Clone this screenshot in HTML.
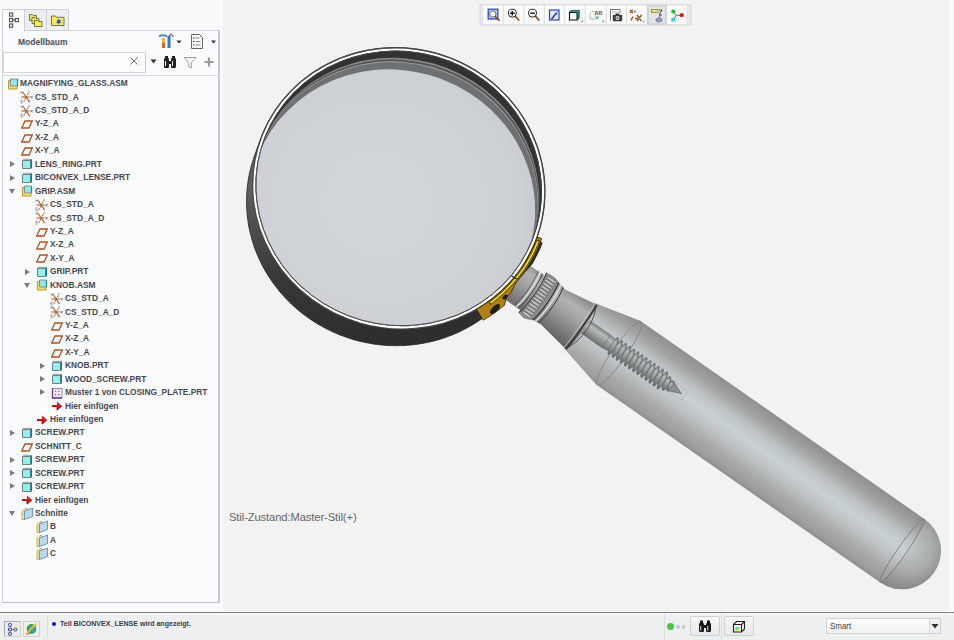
<!DOCTYPE html>
<html><head><meta charset="utf-8">
<style>
*{margin:0;padding:0;box-sizing:border-box}
html,body{width:954px;height:640px;overflow:hidden;background:#f2f2f2;font-family:"Liberation Sans",sans-serif}
.abs{position:absolute}
#left{position:absolute;left:0;top:0;width:223px;height:612px;background:#fafafc}
#panel{position:absolute;left:2px;top:30px;width:218px;height:573px;background:#fafbfd;border:1px solid #cfd2d6;border-right:2px solid #c6cacf;border-bottom:1.5px solid #c2c5c9}
.row{position:absolute;height:14px;font-size:9.5px;font-weight:bold;color:#474751;white-space:nowrap;line-height:14px;transform:scaleX(0.88);transform-origin:0 0}
#status{position:absolute;left:0;top:611.5px;width:954px;height:28.5px;background:#eeeff1;border-top:1.5px solid #7e7e7e;box-shadow:0 -1px 0 #fafafa}
#view{position:absolute;left:0;top:0}

</style></head><body>
<div id="left"></div>
<div id="panel"></div>
<!-- tabs -->
<div class="abs" style="left:2px;top:9px;width:23px;height:23px;background:#fafbfd;border:1px solid #cdd0d4;border-bottom:none"></div>
<div class="abs" style="left:24px;top:9px;width:23px;height:22px;background:#ecedf0;border:1px solid #cdd0d4"></div>
<div class="abs" style="left:46px;top:9px;width:23px;height:22px;background:#ecedf0;border:1px solid #cdd0d4"></div>
<svg class="abs" style="left:8px;top:12px" width="12" height="16" viewBox="0 0 12 16"><g fill="none" stroke="#505050" stroke-width="1.1"><rect x="1.5" y="1" width="3.2" height="3.2"/><rect x="1.5" y="6.5" width="3.2" height="3.2"/><rect x="7.3" y="6.5" width="3.2" height="3.2"/><rect x="1.5" y="12" width="3.2" height="3.2"/><path d="M4.7 8.1h2.6"/></g></svg>
<svg class="abs" style="left:28px;top:12px" width="16" height="16" viewBox="0 0 16 16"><g stroke="#5a5a40" stroke-width="0.8"><path d="M1.5 2.5h3l1 1h3v5h-7z" fill="#e8e060"/><path d="M4 5.5h3l1 1h3v5h-7z" fill="#eee45a"/><path d="M6.5 8.5h3l1 1h3.5v5h-7.5z" fill="#f8f04a"/></g></svg>
<svg class="abs" style="left:50px;top:14px" width="16" height="13" viewBox="0 0 16 13"><path d="M1.5 2h4l1 1.3h7.5v8.2h-12.5z" fill="#f5ee50" stroke="#6a6640" stroke-width="0.9"/><path d="M7.8 4.5l1.3 1.5 1.8-.3-.6 1.8 1 1.5-1.9.1-1 1.6-.7-1.7-1.8-.4 1.3-1.2z" fill="#3848e0"/></svg>
<!-- header -->
<div class="abs" style="left:18px;top:37px;font-size:8.5px;font-weight:bold;color:#4c4c5a;line-height:10px">Modellbaum</div>
<svg class="abs" style="left:157px;top:33px" width="26" height="17" viewBox="0 0 26 17"><path d="M2 3.5c2-1.5 5-1.5 8 0" stroke="#4a8ab8" stroke-width="2" fill="none"/><rect x="5" y="5" width="3" height="10" fill="#e06020"/><rect x="5" y="5" width="3" height="5" fill="#f0b040"/><rect x="10.5" y="3" width="3" height="12" fill="#2a7ad0"/><path d="M12 3l2-2 2 2-1 1" stroke="#707070" stroke-width="1.2" fill="none"/><path d="M19.5 7.5h5l-2.5 3z" fill="#333"/></svg>
<svg class="abs" style="left:190px;top:33px" width="28" height="17" viewBox="0 0 28 17"><path d="M1.5 1.5h8l3 3v11h-11z" fill="#fbfbfb" stroke="#555" stroke-width="0.9"/><path d="M3 5h1.5M3 8.5h1.5M3 12h1.5" stroke="#333" stroke-width="1.2"/><path d="M5.5 5h4M5.5 8.5h5M5.5 12h5" stroke="#777" stroke-width="0.9"/><path d="M21 7.5h5l-2.5 3z" fill="#333"/></svg>
<!-- search -->
<div class="abs" style="left:3px;top:52px;width:143px;height:21px;background:#fdfdfe;border:1px solid #d4d6da;border-right-color:#c8cacd"></div>
<svg class="abs" style="left:129px;top:56px" width="10" height="10" viewBox="0 0 10 10"><path d="M1.5 1.5l7 7M8.5 1.5l-7 7" stroke="#707070" stroke-width="1"/></svg>
<svg class="abs" style="left:150px;top:59px" width="7" height="5" viewBox="0 0 7 5"><path d="M0.5 0.5h6l-3 4z" fill="#333"/></svg>
<svg class="abs" style="left:163px;top:55px" width="14" height="14" viewBox="0 0 14 14"><g fill="#222"><rect x="1" y="3" width="5" height="10" rx="1.2"/><rect x="8" y="3" width="5" height="10" rx="1.2"/><rect x="2" y="1" width="3" height="3"/><rect x="9" y="1" width="3" height="3"/><rect x="5" y="6" width="4" height="3"/></g><path d="M2.5 6v5M9.5 6v5" stroke="#eee" stroke-width="1"/></svg>
<svg class="abs" style="left:183px;top:56px" width="14" height="13" viewBox="0 0 14 13"><path d="M1 1.5h12l-4.7 5v5.5l-2.6-1.5v-4z" fill="none" stroke="#a0a0a0" stroke-width="1"/></svg>
<svg class="abs" style="left:203px;top:56px" width="12" height="12" viewBox="0 0 12 12"><path d="M6 1.5v9M1.5 6h9" stroke="#9a9a9a" stroke-width="2.2"/></svg>
<div class="abs" style="left:3px;top:75px;width:216px;height:1px;background:#d8dadd"></div>
<!-- status bar -->
<div id="status"></div>
<div class="abs" style="left:0;top:613px;width:954px;height:1.5px;background:#f5f5f7"></div>
<div class="abs" style="left:140px;top:639px;width:814px;height:1px;background:#e4f4e4"></div>
<div class="abs" style="left:4px;top:621px;width:17px;height:16px;background:#e9eaec;border:1px solid #a9abae;border-right-color:#d0d2d4;border-bottom-color:#d0d2d4"></div>
<svg class="abs" style="left:6px;top:622px" width="14" height="14" viewBox="0 0 14 14"><g fill="#cfd6f0" stroke="#2a3a90" stroke-width="1"><rect x="2.5" y="1.5" width="3" height="3" rx="1"/><rect x="2.5" y="6" width="3" height="3" rx="1"/><rect x="2.5" y="10.5" width="3" height="2.8" rx="1"/><rect x="8" y="6" width="3" height="3" rx="1.3" stroke="#555"/></g><path d="M5.5 7.5h2.5" stroke="#555" stroke-width="0.8"/></svg>
<div class="abs" style="left:23px;top:621px;width:17px;height:16px;background:#eeeff0;border:1px solid #d0d2d4"></div>
<svg class="abs" style="left:24px;top:622px" width="15" height="14" viewBox="0 0 15 14"><ellipse cx="7.5" cy="7" rx="4.8" ry="5" fill="#2aa84a"/><ellipse cx="7.8" cy="7" rx="2.8" ry="3.6" fill="#3a9ae8"/><path d="M2.5 12c2-3 6-7 10-10" stroke="#f0c020" stroke-width="1.8" fill="none"/><path d="M2.5 12.2c1 .3 2 0 3-1" stroke="#d04020" stroke-width="1" fill="none"/></svg>
<div class="abs" style="left:47px;top:617px;width:1px;height:21px;background:#dcdde0"></div>
<div class="abs" style="left:51.8px;top:621.7px;width:4.4px;height:4.4px;border-radius:50%;background:#1010e8"></div>
<div class="abs" style="left:60px;top:619px;font-size:7.6px;font-weight:bold;color:#3a3a44;line-height:10px;white-space:nowrap;transform:scaleX(0.93);transform-origin:0 0">Teil BICONVEX_LENSE wird angezeigt.</div>
<div class="abs" style="left:664px;top:614px;width:1px;height:25px;background:#dcdde0"></div>
<div class="abs" style="left:721px;top:614px;width:1px;height:25px;background:#dcdde0"></div>
<div class="abs" style="left:666.8px;top:623px;width:7.4px;height:7.4px;border-radius:50%;background:#3ccc3c"></div>
<div class="abs" style="left:676px;top:625px;width:3.8px;height:3.8px;border-radius:50%;background:#c8c8c8"></div>
<div class="abs" style="left:681.7px;top:625px;width:3.8px;height:3.8px;border-radius:50%;background:#c8c8c8"></div>
<div class="abs" style="left:690px;top:616px;width:30px;height:20px;background:linear-gradient(#f7f7f8,#e9e9eb);border:1px solid #cdcfd2;border-radius:2px"></div>
<svg class="abs" style="left:698px;top:620px" width="14" height="13" viewBox="0 0 14 13"><g fill="#1a1a1a"><rect x="1" y="3" width="5" height="9" rx="1.3"/><rect x="8" y="3" width="5" height="9" rx="1.3"/><rect x="2" y="0.5" width="3" height="3"/><rect x="9" y="0.5" width="3" height="3"/><rect x="5" y="5" width="4" height="3"/></g><path d="M2.7 6v4.5M9.7 6v4.5" stroke="#ddd" stroke-width="1"/></svg>
<div class="abs" style="left:724px;top:616px;width:30px;height:20px;background:linear-gradient(#f7f7f8,#e9e9eb);border:1px solid #cdcfd2;border-radius:2px"></div>
<svg class="abs" style="left:732px;top:620px" width="14" height="13" viewBox="0 0 14 13"><path d="M1.5 4.5l3-3h8v7.5l-3 3h-8z" fill="#f4f4f4" stroke="#222" stroke-width="1.1"/><path d="M1.5 4.5h8v7.5M9.5 4.5l3-3" fill="none" stroke="#222" stroke-width="1.1"/><rect x="3" y="7" width="4" height="4" fill="#f0f020"/><rect x="3.5" y="7" width="3" height="2.3" fill="#20d8f0"/></svg>
<div class="abs" style="left:826px;top:618px;width:115px;height:16px;background:linear-gradient(#fdfdfd,#f1f1f2);border:1px solid #cfd1d4"></div>
<div class="abs" style="left:929px;top:619px;width:11px;height:14px;background:#eeeff0;border-left:1px solid #d6d8da"></div>
<svg class="abs" style="left:931px;top:623px" width="8" height="6" viewBox="0 0 8 6"><path d="M0.5 1h7l-3.5 4.5z" fill="#333"/></svg>
<div class="abs" style="left:830px;top:621px;font-size:9px;color:#404040;line-height:10px;transform:scaleX(0.88);transform-origin:0 0">Smart</div>

<div id="tree">
<div class="abs" style="left:7px;top:77.90px;line-height:0"><svg width="12" height="12" viewBox="0 0 12 12"><path d="M1.5 2.5h8.5v8.5h-8.5z" fill="#f4e25a" stroke="#b89a2a" stroke-width="1"/><path d="M3.5 1h7v7h-7z" fill="#8fe8ec" stroke="#7a8a8c" stroke-width="0.9"/><path d="M10.5 1v7" stroke="#1f8f8a" stroke-width="1.2"/></svg></div>
<div class="row" style="left:20px;top:76.20px">MAGNIFYING_GLASS.ASM</div>
<div class="abs" style="left:19.7px;top:91.33px;line-height:0"><svg width="14" height="14" viewBox="0 0 14 14"><g stroke="#b05a22" stroke-width="1.1" fill="none"><path d="M1.5 6h7.8"/><path d="M2.6 0.8l7 10.3"/><path d="M9.4 0.4l-6.2 11.2" stroke-dasharray="1.6 0.9"/></g><path d="M10.3 5l2.4 2.4M12.7 5l-2.4 2.4" stroke="#5a6a80" stroke-width="0.9"/><path d="M0.6 1l1.8 1.2M2.4 1l-1.8 1.2M0.6 9h1.8M0.6 10.5h1.8M0.6 12h1.8" stroke="#6a7080" stroke-width="0.8"/></svg></div>
<div class="row" style="left:35px;top:89.63px">CS_STD_A</div>
<div class="abs" style="left:19.7px;top:104.76px;line-height:0"><svg width="14" height="14" viewBox="0 0 14 14"><g stroke="#b05a22" stroke-width="1.1" fill="none"><path d="M1.5 6h7.8"/><path d="M2.6 0.8l7 10.3"/><path d="M9.4 0.4l-6.2 11.2" stroke-dasharray="1.6 0.9"/></g><path d="M10.3 5l2.4 2.4M12.7 5l-2.4 2.4" stroke="#5a6a80" stroke-width="0.9"/><path d="M0.6 1l1.8 1.2M2.4 1l-1.8 1.2M0.6 9h1.8M0.6 10.5h1.8M0.6 12h1.8" stroke="#6a7080" stroke-width="0.8"/></svg></div>
<div class="row" style="left:35px;top:103.06px">CS_STD_A_D</div>
<div class="abs" style="left:21px;top:118.19px;line-height:0"><svg width="12" height="12" viewBox="0 0 12 12"><path d="M4 3h7.3l-3.3 7h-7.3z" fill="none" stroke="#b0521c" stroke-width="1.3"/></svg></div>
<div class="row" style="left:35px;top:116.49px">Y-Z_A</div>
<div class="abs" style="left:21px;top:131.62px;line-height:0"><svg width="12" height="12" viewBox="0 0 12 12"><path d="M4 3h7.3l-3.3 7h-7.3z" fill="none" stroke="#b0521c" stroke-width="1.3"/></svg></div>
<div class="row" style="left:35px;top:129.92px">X-Z_A</div>
<div class="abs" style="left:21px;top:145.05px;line-height:0"><svg width="12" height="12" viewBox="0 0 12 12"><path d="M4 3h7.3l-3.3 7h-7.3z" fill="none" stroke="#b0521c" stroke-width="1.3"/></svg></div>
<div class="row" style="left:35px;top:143.35px">X-Y_A</div>
<div class="abs" style="left:10.2px;top:161.08px;width:0;height:0;border-top:3.4px solid transparent;border-bottom:3.4px solid transparent;border-left:5.6px solid #7c7c7c"></div>
<div class="abs" style="left:21px;top:158.48px;line-height:0"><svg width="12" height="12" viewBox="0 0 12 12"><path d="M1.5 2.5h8v8h-8z" fill="#8ff0f2" stroke="#6f7f80" stroke-width="1"/><path d="M2 1.3h8.3v8.2" fill="none" stroke="#8a9090" stroke-width="0.9"/><path d="M10.3 1.5v9" stroke="#137f78" stroke-width="1.5"/></svg></div>
<div class="row" style="left:35px;top:156.78px">LENS_RING.PRT</div>
<div class="abs" style="left:10.2px;top:174.51px;width:0;height:0;border-top:3.4px solid transparent;border-bottom:3.4px solid transparent;border-left:5.6px solid #7c7c7c"></div>
<div class="abs" style="left:21px;top:171.91px;line-height:0"><svg width="12" height="12" viewBox="0 0 12 12"><path d="M1.5 2.5h8v8h-8z" fill="#8ff0f2" stroke="#6f7f80" stroke-width="1"/><path d="M2 1.3h8.3v8.2" fill="none" stroke="#8a9090" stroke-width="0.9"/><path d="M10.3 1.5v9" stroke="#137f78" stroke-width="1.5"/></svg></div>
<div class="row" style="left:35px;top:170.21px">BICONVEX_LENSE.PRT</div>
<div class="abs" style="left:9.299999999999999px;top:188.74px;width:0;height:0;border-left:3.3px solid transparent;border-right:3.3px solid transparent;border-top:5.5px solid #7c7c7c"></div>
<div class="abs" style="left:21px;top:185.34px;line-height:0"><svg width="12" height="12" viewBox="0 0 12 12"><path d="M1.5 2.5h8.5v8.5h-8.5z" fill="#f4e25a" stroke="#b89a2a" stroke-width="1"/><path d="M3.5 1h7v7h-7z" fill="#8fe8ec" stroke="#7a8a8c" stroke-width="0.9"/><path d="M10.5 1v7" stroke="#1f8f8a" stroke-width="1.2"/></svg></div>
<div class="row" style="left:35px;top:183.64px">GRIP.ASM</div>
<div class="abs" style="left:34.7px;top:198.77px;line-height:0"><svg width="14" height="14" viewBox="0 0 14 14"><g stroke="#b05a22" stroke-width="1.1" fill="none"><path d="M1.5 6h7.8"/><path d="M2.6 0.8l7 10.3"/><path d="M9.4 0.4l-6.2 11.2" stroke-dasharray="1.6 0.9"/></g><path d="M10.3 5l2.4 2.4M12.7 5l-2.4 2.4" stroke="#5a6a80" stroke-width="0.9"/><path d="M0.6 1l1.8 1.2M2.4 1l-1.8 1.2M0.6 9h1.8M0.6 10.5h1.8M0.6 12h1.8" stroke="#6a7080" stroke-width="0.8"/></svg></div>
<div class="row" style="left:50px;top:197.07px">CS_STD_A</div>
<div class="abs" style="left:34.7px;top:212.20px;line-height:0"><svg width="14" height="14" viewBox="0 0 14 14"><g stroke="#b05a22" stroke-width="1.1" fill="none"><path d="M1.5 6h7.8"/><path d="M2.6 0.8l7 10.3"/><path d="M9.4 0.4l-6.2 11.2" stroke-dasharray="1.6 0.9"/></g><path d="M10.3 5l2.4 2.4M12.7 5l-2.4 2.4" stroke="#5a6a80" stroke-width="0.9"/><path d="M0.6 1l1.8 1.2M2.4 1l-1.8 1.2M0.6 9h1.8M0.6 10.5h1.8M0.6 12h1.8" stroke="#6a7080" stroke-width="0.8"/></svg></div>
<div class="row" style="left:50px;top:210.50px">CS_STD_A_D</div>
<div class="abs" style="left:36px;top:225.63px;line-height:0"><svg width="12" height="12" viewBox="0 0 12 12"><path d="M4 3h7.3l-3.3 7h-7.3z" fill="none" stroke="#b0521c" stroke-width="1.3"/></svg></div>
<div class="row" style="left:50px;top:223.93px">Y-Z_A</div>
<div class="abs" style="left:36px;top:239.06px;line-height:0"><svg width="12" height="12" viewBox="0 0 12 12"><path d="M4 3h7.3l-3.3 7h-7.3z" fill="none" stroke="#b0521c" stroke-width="1.3"/></svg></div>
<div class="row" style="left:50px;top:237.36px">X-Z_A</div>
<div class="abs" style="left:36px;top:252.49px;line-height:0"><svg width="12" height="12" viewBox="0 0 12 12"><path d="M4 3h7.3l-3.3 7h-7.3z" fill="none" stroke="#b0521c" stroke-width="1.3"/></svg></div>
<div class="row" style="left:50px;top:250.79px">X-Y_A</div>
<div class="abs" style="left:25.2px;top:268.52px;width:0;height:0;border-top:3.4px solid transparent;border-bottom:3.4px solid transparent;border-left:5.6px solid #7c7c7c"></div>
<div class="abs" style="left:36px;top:265.92px;line-height:0"><svg width="12" height="12" viewBox="0 0 12 12"><path d="M1.5 2.5h8v8h-8z" fill="#8ff0f2" stroke="#6f7f80" stroke-width="1"/><path d="M2 1.3h8.3v8.2" fill="none" stroke="#8a9090" stroke-width="0.9"/><path d="M10.3 1.5v9" stroke="#137f78" stroke-width="1.5"/></svg></div>
<div class="row" style="left:50px;top:264.22px">GRIP.PRT</div>
<div class="abs" style="left:24.3px;top:282.75px;width:0;height:0;border-left:3.3px solid transparent;border-right:3.3px solid transparent;border-top:5.5px solid #7c7c7c"></div>
<div class="abs" style="left:36px;top:279.35px;line-height:0"><svg width="12" height="12" viewBox="0 0 12 12"><path d="M1.5 2.5h8.5v8.5h-8.5z" fill="#f4e25a" stroke="#b89a2a" stroke-width="1"/><path d="M3.5 1h7v7h-7z" fill="#8fe8ec" stroke="#7a8a8c" stroke-width="0.9"/><path d="M10.5 1v7" stroke="#1f8f8a" stroke-width="1.2"/></svg></div>
<div class="row" style="left:50px;top:277.65px">KNOB.ASM</div>
<div class="abs" style="left:49.7px;top:292.78px;line-height:0"><svg width="14" height="14" viewBox="0 0 14 14"><g stroke="#b05a22" stroke-width="1.1" fill="none"><path d="M1.5 6h7.8"/><path d="M2.6 0.8l7 10.3"/><path d="M9.4 0.4l-6.2 11.2" stroke-dasharray="1.6 0.9"/></g><path d="M10.3 5l2.4 2.4M12.7 5l-2.4 2.4" stroke="#5a6a80" stroke-width="0.9"/><path d="M0.6 1l1.8 1.2M2.4 1l-1.8 1.2M0.6 9h1.8M0.6 10.5h1.8M0.6 12h1.8" stroke="#6a7080" stroke-width="0.8"/></svg></div>
<div class="row" style="left:65px;top:291.08px">CS_STD_A</div>
<div class="abs" style="left:49.7px;top:306.21px;line-height:0"><svg width="14" height="14" viewBox="0 0 14 14"><g stroke="#b05a22" stroke-width="1.1" fill="none"><path d="M1.5 6h7.8"/><path d="M2.6 0.8l7 10.3"/><path d="M9.4 0.4l-6.2 11.2" stroke-dasharray="1.6 0.9"/></g><path d="M10.3 5l2.4 2.4M12.7 5l-2.4 2.4" stroke="#5a6a80" stroke-width="0.9"/><path d="M0.6 1l1.8 1.2M2.4 1l-1.8 1.2M0.6 9h1.8M0.6 10.5h1.8M0.6 12h1.8" stroke="#6a7080" stroke-width="0.8"/></svg></div>
<div class="row" style="left:65px;top:304.51px">CS_STD_A_D</div>
<div class="abs" style="left:51px;top:319.64px;line-height:0"><svg width="12" height="12" viewBox="0 0 12 12"><path d="M4 3h7.3l-3.3 7h-7.3z" fill="none" stroke="#b0521c" stroke-width="1.3"/></svg></div>
<div class="row" style="left:65px;top:317.94px">Y-Z_A</div>
<div class="abs" style="left:51px;top:333.07px;line-height:0"><svg width="12" height="12" viewBox="0 0 12 12"><path d="M4 3h7.3l-3.3 7h-7.3z" fill="none" stroke="#b0521c" stroke-width="1.3"/></svg></div>
<div class="row" style="left:65px;top:331.37px">X-Z_A</div>
<div class="abs" style="left:51px;top:346.50px;line-height:0"><svg width="12" height="12" viewBox="0 0 12 12"><path d="M4 3h7.3l-3.3 7h-7.3z" fill="none" stroke="#b0521c" stroke-width="1.3"/></svg></div>
<div class="row" style="left:65px;top:344.80px">X-Y_A</div>
<div class="abs" style="left:40.2px;top:362.53px;width:0;height:0;border-top:3.4px solid transparent;border-bottom:3.4px solid transparent;border-left:5.6px solid #7c7c7c"></div>
<div class="abs" style="left:51px;top:359.93px;line-height:0"><svg width="12" height="12" viewBox="0 0 12 12"><path d="M1.5 2.5h8v8h-8z" fill="#8ff0f2" stroke="#6f7f80" stroke-width="1"/><path d="M2 1.3h8.3v8.2" fill="none" stroke="#8a9090" stroke-width="0.9"/><path d="M10.3 1.5v9" stroke="#137f78" stroke-width="1.5"/></svg></div>
<div class="row" style="left:65px;top:358.23px">KNOB.PRT</div>
<div class="abs" style="left:40.2px;top:375.96px;width:0;height:0;border-top:3.4px solid transparent;border-bottom:3.4px solid transparent;border-left:5.6px solid #7c7c7c"></div>
<div class="abs" style="left:51px;top:373.36px;line-height:0"><svg width="12" height="12" viewBox="0 0 12 12"><path d="M1.5 2.5h8v8h-8z" fill="#8ff0f2" stroke="#6f7f80" stroke-width="1"/><path d="M2 1.3h8.3v8.2" fill="none" stroke="#8a9090" stroke-width="0.9"/><path d="M10.3 1.5v9" stroke="#137f78" stroke-width="1.5"/></svg></div>
<div class="row" style="left:65px;top:371.66px">WOOD_SCREW.PRT</div>
<div class="abs" style="left:40.2px;top:389.39px;width:0;height:0;border-top:3.4px solid transparent;border-bottom:3.4px solid transparent;border-left:5.6px solid #7c7c7c"></div>
<div class="abs" style="left:51px;top:386.79px;line-height:0"><svg width="12" height="12" viewBox="0 0 12 12"><rect x="1.5" y="1.5" width="9.5" height="9.5" fill="#f3eefc" stroke="#9a7ac8" stroke-width="1"/><path d="M1.5 1.5v9.5h9.5" fill="none" stroke="#6a3aa8" stroke-width="1.3"/><g fill="#7a4ac0"><rect x="4" y="3.5" width="1.3" height="1.3"/><rect x="7.2" y="3.5" width="1.3" height="1.3"/><rect x="4" y="7" width="1.3" height="1.3"/><rect x="7.2" y="7" width="1.3" height="1.3"/></g></svg></div>
<div class="row" style="left:65px;top:385.09px">Muster 1 von CLOSING_PLATE.PRT</div>
<div class="abs" style="left:51px;top:400.22px;line-height:0"><svg width="12" height="12" viewBox="0 0 12 12"><path d="M1 5h5v-3.5l5 4.5-5 4.5v-3.5h-5z" fill="#e01818"/><path d="M1 6.5h5v3.5l5-4" fill="none" stroke="#8a0a0a" stroke-width="0.8"/></svg></div>
<div class="row" style="left:65px;top:398.52px">Hier einfügen</div>
<div class="abs" style="left:36px;top:413.65px;line-height:0"><svg width="12" height="12" viewBox="0 0 12 12"><path d="M1 5h5v-3.5l5 4.5-5 4.5v-3.5h-5z" fill="#e01818"/><path d="M1 6.5h5v3.5l5-4" fill="none" stroke="#8a0a0a" stroke-width="0.8"/></svg></div>
<div class="row" style="left:50px;top:411.95px">Hier einfügen</div>
<div class="abs" style="left:10.2px;top:429.68px;width:0;height:0;border-top:3.4px solid transparent;border-bottom:3.4px solid transparent;border-left:5.6px solid #7c7c7c"></div>
<div class="abs" style="left:21px;top:427.08px;line-height:0"><svg width="12" height="12" viewBox="0 0 12 12"><path d="M1.5 2.5h8v8h-8z" fill="#8ff0f2" stroke="#6f7f80" stroke-width="1"/><path d="M2 1.3h8.3v8.2" fill="none" stroke="#8a9090" stroke-width="0.9"/><path d="M10.3 1.5v9" stroke="#137f78" stroke-width="1.5"/></svg></div>
<div class="row" style="left:35px;top:425.38px">SCREW.PRT</div>
<div class="abs" style="left:21px;top:440.51px;line-height:0"><svg width="12" height="12" viewBox="0 0 12 12"><path d="M4 3h7.3l-3.3 7h-7.3z" fill="none" stroke="#b0521c" stroke-width="1.3"/></svg></div>
<div class="row" style="left:35px;top:438.81px">SCHNITT_C</div>
<div class="abs" style="left:10.2px;top:456.54px;width:0;height:0;border-top:3.4px solid transparent;border-bottom:3.4px solid transparent;border-left:5.6px solid #7c7c7c"></div>
<div class="abs" style="left:21px;top:453.94px;line-height:0"><svg width="12" height="12" viewBox="0 0 12 12"><path d="M1.5 2.5h8v8h-8z" fill="#8ff0f2" stroke="#6f7f80" stroke-width="1"/><path d="M2 1.3h8.3v8.2" fill="none" stroke="#8a9090" stroke-width="0.9"/><path d="M10.3 1.5v9" stroke="#137f78" stroke-width="1.5"/></svg></div>
<div class="row" style="left:35px;top:452.24px">SCREW.PRT</div>
<div class="abs" style="left:10.2px;top:469.97px;width:0;height:0;border-top:3.4px solid transparent;border-bottom:3.4px solid transparent;border-left:5.6px solid #7c7c7c"></div>
<div class="abs" style="left:21px;top:467.37px;line-height:0"><svg width="12" height="12" viewBox="0 0 12 12"><path d="M1.5 2.5h8v8h-8z" fill="#8ff0f2" stroke="#6f7f80" stroke-width="1"/><path d="M2 1.3h8.3v8.2" fill="none" stroke="#8a9090" stroke-width="0.9"/><path d="M10.3 1.5v9" stroke="#137f78" stroke-width="1.5"/></svg></div>
<div class="row" style="left:35px;top:465.67px">SCREW.PRT</div>
<div class="abs" style="left:10.2px;top:483.40px;width:0;height:0;border-top:3.4px solid transparent;border-bottom:3.4px solid transparent;border-left:5.6px solid #7c7c7c"></div>
<div class="abs" style="left:21px;top:480.80px;line-height:0"><svg width="12" height="12" viewBox="0 0 12 12"><path d="M1.5 2.5h8v8h-8z" fill="#8ff0f2" stroke="#6f7f80" stroke-width="1"/><path d="M2 1.3h8.3v8.2" fill="none" stroke="#8a9090" stroke-width="0.9"/><path d="M10.3 1.5v9" stroke="#137f78" stroke-width="1.5"/></svg></div>
<div class="row" style="left:35px;top:479.10px">SCREW.PRT</div>
<div class="abs" style="left:21px;top:494.23px;line-height:0"><svg width="12" height="12" viewBox="0 0 12 12"><path d="M1 5h5v-3.5l5 4.5-5 4.5v-3.5h-5z" fill="#e01818"/><path d="M1 6.5h5v3.5l5-4" fill="none" stroke="#8a0a0a" stroke-width="0.8"/></svg></div>
<div class="row" style="left:35px;top:492.53px">Hier einfügen</div>
<div class="abs" style="left:9.299999999999999px;top:511.06px;width:0;height:0;border-left:3.3px solid transparent;border-right:3.3px solid transparent;border-top:5.5px solid #7c7c7c"></div>
<div class="abs" style="left:21px;top:506.66px;line-height:0"><svg width="13" height="13" viewBox="0 0 13 13"><path d="M1 4.5l3-3h2v9l-3 2h-2z" fill="#f1e28a" stroke="#b6a060" stroke-width="0.8"/><path d="M3.5 4l8-3v8.5l-8 3z" fill="#b9d9f2" stroke="#5f8fb5" stroke-width="0.9"/></svg></div>
<div class="row" style="left:35px;top:505.96px">Schnitte</div>
<div class="abs" style="left:36px;top:520.09px;line-height:0"><svg width="13" height="13" viewBox="0 0 13 13"><path d="M1 4.5l3-3h2v9l-3 2h-2z" fill="#f1e28a" stroke="#b6a060" stroke-width="0.8"/><path d="M3.5 4l8-3v8.5l-8 3z" fill="#b9d9f2" stroke="#5f8fb5" stroke-width="0.9"/></svg></div>
<div class="row" style="left:50px;top:519.39px">B</div>
<div class="abs" style="left:36px;top:533.52px;line-height:0"><svg width="13" height="13" viewBox="0 0 13 13"><path d="M1 4.5l3-3h2v9l-3 2h-2z" fill="#f1e28a" stroke="#b6a060" stroke-width="0.8"/><path d="M3.5 4l8-3v8.5l-8 3z" fill="#b9d9f2" stroke="#5f8fb5" stroke-width="0.9"/></svg></div>
<div class="row" style="left:50px;top:532.82px">A</div>
<div class="abs" style="left:36px;top:546.95px;line-height:0"><svg width="13" height="13" viewBox="0 0 13 13"><path d="M1 4.5l3-3h2v9l-3 2h-2z" fill="#f1e28a" stroke="#b6a060" stroke-width="0.8"/><path d="M3.5 4l8-3v8.5l-8 3z" fill="#b9d9f2" stroke="#5f8fb5" stroke-width="0.9"/></svg></div>
<div class="row" style="left:50px;top:546.25px">C</div>
</div>
<svg id="view" width="954" height="640" viewBox="0 0 954 640" style="position:absolute;left:0;top:0">
<defs><linearGradient id="band" x1="0" y1="0" x2="0.25" y2="1"><stop offset="0" stop-color="#7a7a7a"/><stop offset="0.45" stop-color="#5e5e5e"/><stop offset="0.75" stop-color="#383838"/><stop offset="1" stop-color="#2e2e2e"/></linearGradient><radialGradient id="lens" cx="0.45" cy="0.5" r="0.6"><stop offset="0" stop-color="#d3d6da"/><stop offset="0.8" stop-color="#cdd1d5"/><stop offset="1" stop-color="#c6cacf"/></radialGradient><clipPath id="inner"><ellipse cx="398.70" cy="188.40" rx="143.50" ry="137.10" transform="rotate(15.8 398.70 188.40)" /></clipPath></defs>
<rect x="948.5" y="0" width="1.5" height="611" fill="#f5f5f5"/><rect x="950" y="0" width="4" height="611" fill="#fafafa"/>
<path d="M246.6 201.2 L246.6 197.5 L246.8 193.8 L247.0 190.1 L247.4 186.5 L247.9 182.8 L248.4 179.2 L249.1 175.6 L249.8 172.0 L250.7 168.4 L251.6 164.8 L252.7 161.3 L253.8 157.8 L259.6 141.4 L260.9 138.0 L262.2 134.5 L263.6 131.1 L265.2 127.8 L266.8 124.5 L268.5 121.2 L270.3 118.0 L272.2 114.8 L274.1 111.7 L276.2 108.6 L278.3 105.6 L280.5 102.7 L282.8 99.8 L285.2 96.9 L287.7 94.2 L290.2 91.5 L292.8 88.8 L295.5 86.2 L298.2 83.7 L301.1 81.3 L303.9 78.9 L306.9 76.7 L309.9 74.4 L313.0 72.3 L316.1 70.3 L319.3 68.3 L322.6 66.4 L325.9 64.6 L329.2 62.9 L332.6 61.3 L336.0 59.7 L339.5 58.3 L343.0 56.9 L346.6 55.6 L350.2 54.4 L353.8 53.3 L357.5 52.3 L361.2 51.4 L364.9 50.6 L368.6 49.9 L372.4 49.3 L376.2 48.7 L380.0 48.3 L383.8 48.0 L387.6 47.7 L391.4 47.6 L395.2 47.5 L399.1 47.6 L402.9 47.7 L406.7 47.9 L410.5 48.3 L414.4 48.7 L418.2 49.2 L422.0 49.9 L425.7 50.6 L429.5 51.4 L433.2 52.3 L436.9 53.3 L440.6 54.4 L444.3 55.6 L447.9 56.9 L451.5 58.2 L455.0 59.7 L458.6 61.2 L462.0 62.9 L465.5 64.6 L468.8 66.4 L472.2 68.3 L475.5 70.2 L478.7 72.3 L481.9 74.4 L485.0 76.6 L488.1 78.9 L491.1 81.2 L494.0 83.7 L496.9 86.2 L499.7 88.7 L502.4 91.4 L505.1 94.1 L507.7 96.9 L510.2 99.7 L512.7 102.6 L515.0 105.6 L517.3 108.6 L519.5 111.6 L521.6 114.8 L523.7 117.9 L525.6 121.1 L527.5 124.4 L529.3 127.7 L530.9 131.1 L532.5 134.4 L534.0 137.9 L535.4 141.3 L536.8 144.8 L538.0 148.3 L539.1 151.9 L540.1 155.5 L541.1 159.1 L541.9 162.7 L542.7 166.3 L543.3 170.0 L543.8 173.6 L544.3 177.3 L544.6 181.0 L544.9 184.7 L545.0 188.4 L545.0 192.0 L545.0 195.7 L544.8 199.4 L544.6 203.1 L544.2 206.7 L543.7 210.4 L543.2 214.0 L542.5 217.6 L541.8 221.2 L540.9 224.8 L540.0 228.4 L538.9 231.9 L537.8 235.4 L532.0 251.8 L530.7 255.2 L529.4 258.7 L528.0 262.1 L526.4 265.4 L524.8 268.7 L523.1 272.0 L521.3 275.2 L519.4 278.4 L517.5 281.5 L515.4 284.6 L513.3 287.6 L511.1 290.5 L508.8 293.4 L506.4 296.3 L503.9 299.0 L501.4 301.7 L498.8 304.4 L496.1 307.0 L493.4 309.5 L490.5 311.9 L487.7 314.3 L484.7 316.5 L481.7 318.8 L478.6 320.9 L475.5 322.9 L472.3 324.9 L469.0 326.8 L465.7 328.6 L462.4 330.3 L459.0 331.9 L455.6 333.5 L452.1 334.9 L448.6 336.3 L445.0 337.6 L441.4 338.8 L437.8 339.9 L434.1 340.9 L430.4 341.8 L426.7 342.6 L423.0 343.3 L419.2 343.9 L415.4 344.5 L411.6 344.9 L407.8 345.2 L404.0 345.5 L400.2 345.6 L396.4 345.7 L392.5 345.6 L388.7 345.5 L384.9 345.3 L381.1 344.9 L377.2 344.5 L373.4 344.0 L369.6 343.3 L365.9 342.6 L362.1 341.8 L358.4 340.9 L354.7 339.9 L351.0 338.8 L347.3 337.6 L343.7 336.3 L340.1 335.0 L336.6 333.5 L333.0 332.0 L329.6 330.3 L326.1 328.6 L322.8 326.8 L319.4 324.9 L316.1 323.0 L312.9 320.9 L309.7 318.8 L306.6 316.6 L303.5 314.3 L300.5 312.0 L297.6 309.5 L294.7 307.0 L291.9 304.5 L289.2 301.8 L286.5 299.1 L283.9 296.3 L281.4 293.5 L278.9 290.6 L276.6 287.6 L274.3 284.6 L272.1 281.6 L270.0 278.4 L267.9 275.3 L266.0 272.1 L264.1 268.8 L262.3 265.5 L260.7 262.1 L259.1 258.8 L257.6 255.3 L256.2 251.9 L254.8 248.4 L253.6 244.9 L252.5 241.3 L251.5 237.7 L250.5 234.1 L249.7 230.5 L248.9 226.9 L248.3 223.2 L247.8 219.6 L247.3 215.9 L247.0 212.2 L246.7 208.5 L246.6 204.8Z" fill="url(#band)" stroke="#2a2a2a" stroke-width="0.9"/>
<ellipse cx="398.70" cy="188.40" rx="146.50" ry="140.10" transform="rotate(15.8 398.70 188.40)" fill="#333" stroke="#4a4a4a" stroke-width="1.1"/>
<ellipse cx="398.70" cy="188.40" rx="144.80" ry="138.40" transform="rotate(15.8 398.70 188.40)" fill="none" stroke="#ffffff" stroke-width="2.2"/>
<g clip-path="url(#inner)"><ellipse cx="398.70" cy="188.40" rx="143.50" ry="137.10" transform="rotate(15.8 398.70 188.40)" fill="#323232"/><ellipse cx="396.21" cy="195.45" rx="143.50" ry="137.10" transform="rotate(15.8 396.21 195.45)" fill="#8a8a8a"/><ellipse cx="395.68" cy="196.93" rx="143.50" ry="137.10" transform="rotate(15.8 395.68 196.93)" fill="#565656"/><ellipse cx="394.99" cy="198.90" rx="143.50" ry="137.10" transform="rotate(15.8 394.99 198.90)" fill="#a0a0a0"/><ellipse cx="394.64" cy="199.88" rx="143.50" ry="137.10" transform="rotate(15.8 394.64 199.88)" fill="#6e7174"/><ellipse cx="392.15" cy="206.93" rx="143.50" ry="137.10" transform="rotate(15.8 392.15 206.93)" fill="url(#lens)"/></g>
<ellipse cx="398.70" cy="188.40" rx="143.20" ry="136.80" transform="rotate(15.8 398.70 188.40)" fill="none" stroke="#454545" stroke-width="0.9"/>
<defs>
<linearGradient id="gbody" gradientUnits="userSpaceOnUse" x1="0" y1="-39" x2="0" y2="39">
<stop offset="0" stop-color="#8e8e8e"/><stop offset="0.15" stop-color="#a0a1a1"/><stop offset="0.33" stop-color="#bec4c5"/><stop offset="0.47" stop-color="#cad1d2"/><stop offset="0.6" stop-color="#c0c6c7"/><stop offset="0.8" stop-color="#a8aaaa"/><stop offset="0.93" stop-color="#9c9d9d"/><stop offset="1" stop-color="#8e8e8e"/></linearGradient>
<linearGradient id="gmetal" gradientUnits="userSpaceOnUse" x1="0" y1="-27" x2="0" y2="27">
<stop offset="0" stop-color="#858585"/><stop offset="0.25" stop-color="#b2b2b2"/><stop offset="0.45" stop-color="#a2a2a2"/><stop offset="0.75" stop-color="#7c7c7c"/><stop offset="1" stop-color="#5e5e5e"/></linearGradient>
<linearGradient id="gscrew" gradientUnits="userSpaceOnUse" x1="0" y1="-10.5" x2="0" y2="5.5">
<stop offset="0" stop-color="#7a7c7c"/><stop offset="0.3" stop-color="#b8bcbd"/><stop offset="0.7" stop-color="#8c8f90"/><stop offset="1" stop-color="#6a6c6c"/></linearGradient>
<linearGradient id="gthread" x1="0" y1="0" x2="0" y2="1"><stop offset="0" stop-color="#6f7273"/><stop offset="0.3" stop-color="#b4b8b9"/><stop offset="0.55" stop-color="#9a9e9f"/><stop offset="1" stop-color="#606364"/></linearGradient>
<radialGradient id="gcap" gradientUnits="userSpaceOnUse" cx="395" cy="-6" r="40">
<stop offset="0" stop-color="#c3c8c9"/><stop offset="0.6" stop-color="#a8abab"/><stop offset="1" stop-color="#8a8a8a"/></radialGradient>

</defs>
<g transform="translate(581.4 327) rotate(34.9)">
<path d="M-2 -27 L45 -38.5 L391 -38.5 A38.5 38.4 0 0 1 391 38.3 L45 38.5 L-2 27 Z" fill="url(#gbody)" stroke="#8a8a8a" stroke-width="0.6"/>
<path d="M391 -38.5 A38.5 38.4 0 0 1 391 38.3 A4.5 38.4 0 0 0 391 -38.5Z" fill="url(#gcap)"/>
<ellipse cx="391" cy="-0.1" rx="4.5" ry="38.4" fill="none" stroke="#6e7070" stroke-width="0.7"/>
<ellipse cx="46" cy="0" rx="7" ry="38.5" fill="none" stroke="#80848a" stroke-width="0.8"/>
<path d="M-2 -10.5 L28 -10.5 L36 -9.5 L36 4.5 L28 5.5 L-2 5.5Z" fill="url(#gscrew)"/>
<path d="M28 -10.5 C29 -6 29 1 28 5.5" fill="none" stroke="#6e7273" stroke-width="0.6"/>
<path d="M35 -9.5 L107 -8.5 L120 -2.5 L107 3.5 L35 4.5Z" fill="#8a8e8f"/><ellipse cx="37.0" cy="-2.5" rx="2.3" ry="9.8" transform="rotate(-5 37.0 -2.5)" fill="url(#gthread)" stroke="#606465" stroke-width="0.6"/><ellipse cx="42.0" cy="-2.5" rx="2.3" ry="9.8" transform="rotate(-5 42.0 -2.5)" fill="url(#gthread)" stroke="#606465" stroke-width="0.6"/><ellipse cx="47.0" cy="-2.5" rx="2.3" ry="9.8" transform="rotate(-5 47.0 -2.5)" fill="url(#gthread)" stroke="#606465" stroke-width="0.6"/><ellipse cx="52.0" cy="-2.5" rx="2.3" ry="9.8" transform="rotate(-5 52.0 -2.5)" fill="url(#gthread)" stroke="#606465" stroke-width="0.6"/><ellipse cx="57.0" cy="-2.5" rx="2.3" ry="9.8" transform="rotate(-5 57.0 -2.5)" fill="url(#gthread)" stroke="#606465" stroke-width="0.6"/><ellipse cx="62.0" cy="-2.5" rx="2.3" ry="9.8" transform="rotate(-5 62.0 -2.5)" fill="url(#gthread)" stroke="#606465" stroke-width="0.6"/><ellipse cx="67.0" cy="-2.5" rx="2.3" ry="9.8" transform="rotate(-5 67.0 -2.5)" fill="url(#gthread)" stroke="#606465" stroke-width="0.6"/><ellipse cx="72.0" cy="-2.5" rx="2.3" ry="9.8" transform="rotate(-5 72.0 -2.5)" fill="url(#gthread)" stroke="#606465" stroke-width="0.6"/><ellipse cx="77.0" cy="-2.5" rx="2.3" ry="9.8" transform="rotate(-5 77.0 -2.5)" fill="url(#gthread)" stroke="#606465" stroke-width="0.6"/><ellipse cx="82.0" cy="-2.5" rx="2.3" ry="9.8" transform="rotate(-5 82.0 -2.5)" fill="url(#gthread)" stroke="#606465" stroke-width="0.6"/><ellipse cx="87.0" cy="-2.5" rx="2.3" ry="9.8" transform="rotate(-5 87.0 -2.5)" fill="url(#gthread)" stroke="#606465" stroke-width="0.6"/><ellipse cx="92.0" cy="-2.5" rx="2.3" ry="9.8" transform="rotate(-5 92.0 -2.5)" fill="url(#gthread)" stroke="#606465" stroke-width="0.6"/><ellipse cx="97.0" cy="-2.5" rx="2.3" ry="9.8" transform="rotate(-5 97.0 -2.5)" fill="url(#gthread)" stroke="#606465" stroke-width="0.6"/><ellipse cx="102.0" cy="-2.5" rx="2.3" ry="7.8" transform="rotate(-5 102.0 -2.5)" fill="url(#gthread)" stroke="#606465" stroke-width="0.6"/><ellipse cx="107.0" cy="-2.5" rx="2.3" ry="5.8" transform="rotate(-5 107.0 -2.5)" fill="url(#gthread)" stroke="#606465" stroke-width="0.6"/>
<path d="M108 -7 L120.5 -2.5 L108 2 Z" fill="#8a8e8f" stroke="#666" stroke-width="0.5"/>
<path d="M108 -8 L124 -7.5 L124 2.5 L108 3" fill="none" stroke="#a8b0b0" stroke-width="0.6"/>
<path d="M-37 -21 L0 -27 C5 -14 5 14 0 27 L-37 20.5 C-34 10 -34 -10 -37 -21Z" fill="url(#gmetal)"/>
<path d="M0 -25.5 C8 -12 8 12 0 25.5" fill="none" stroke="#505050" stroke-width="0.9"/>
<path d="M0 -27 C1 -14 1 14 0 27" fill="none" stroke="#333" stroke-width="1.8"/>
<path d="M-2.5 -26.5 C-1.5 -14 -1.5 14 -2.5 26.5" fill="none" stroke="#c4c4c4" stroke-width="0.8"/>
<path d="M-45 -23.5 L-36 -22 C-33 -10 -33 10 -36 21 L-45 22 C-42 10 -42 -10 -45 -23.5Z" fill="url(#gmetal)"/>
<path d="M-44 -23.5 C-41 -10 -41 10 -44 22" fill="none" stroke="#333" stroke-width="0.9"/>
<path d="M-41 -23 C-38 -10 -38 10 -41 21.5" fill="none" stroke="#dedede" stroke-width="1.6"/>
<path d="M-37.5 -22 C-34.5 -10 -34.5 10 -37.5 21" fill="none" stroke="#333" stroke-width="0.9"/>
<path d="M-60 -24.5 C-52 -26 -50 -26 -44 -23.5 C-41 -10 -41 10 -44 22 C-50 26.5 -54 26.5 -60 24 C-57 10 -57 -10 -60 -24.5Z" fill="#8e8e8e"/>
<ellipse cx="-51.5" cy="-21.5" rx="6.2" ry="1.5" fill="#bdbdbd" stroke="#555" stroke-width="0.6"/><ellipse cx="-51.5" cy="-17.9" rx="6.2" ry="1.5" fill="#bdbdbd" stroke="#555" stroke-width="0.6"/><ellipse cx="-51.5" cy="-14.4" rx="6.2" ry="1.5" fill="#bdbdbd" stroke="#555" stroke-width="0.6"/><ellipse cx="-51.5" cy="-10.9" rx="6.2" ry="1.5" fill="#bdbdbd" stroke="#555" stroke-width="0.6"/><ellipse cx="-51.5" cy="-7.3" rx="6.2" ry="1.5" fill="#bdbdbd" stroke="#555" stroke-width="0.6"/><ellipse cx="-51.5" cy="-3.8" rx="6.2" ry="1.5" fill="#bdbdbd" stroke="#555" stroke-width="0.6"/><ellipse cx="-51.5" cy="-0.2" rx="6.2" ry="1.5" fill="#bdbdbd" stroke="#555" stroke-width="0.6"/><ellipse cx="-51.5" cy="3.3" rx="6.2" ry="1.5" fill="#bdbdbd" stroke="#555" stroke-width="0.6"/><ellipse cx="-51.5" cy="6.9" rx="6.2" ry="1.5" fill="#bdbdbd" stroke="#555" stroke-width="0.6"/><ellipse cx="-51.5" cy="10.4" rx="6.2" ry="1.5" fill="#bdbdbd" stroke="#555" stroke-width="0.6"/><ellipse cx="-51.5" cy="14.0" rx="6.2" ry="1.5" fill="#bdbdbd" stroke="#555" stroke-width="0.6"/><ellipse cx="-51.5" cy="17.5" rx="6.2" ry="1.5" fill="#bdbdbd" stroke="#555" stroke-width="0.6"/><ellipse cx="-51.5" cy="21.1" rx="6.2" ry="1.5" fill="#bdbdbd" stroke="#555" stroke-width="0.6"/>
<path d="M-59.5 -24.5 C-56.5 -10 -56.5 10 -59.5 24" fill="none" stroke="#333" stroke-width="1"/>
<path d="M-44 -23.5 C-41 -10 -41 10 -44 22" fill="none" stroke="#333" stroke-width="1"/>
<path d="M-84 -21 L-59.5 -21 C-57 -10 -57 10 -59.5 21 L-84 21 C-87 10 -87 -10 -84 -21Z" fill="url(#gmetal)"/>
<path d="M-65 -21.5 C-62 -10 -62 10 -65 20.5" fill="none" stroke="#d8d8d8" stroke-width="1.8"/>
<path d="M-62.5 -21.5 C-59.5 -10 -59.5 10 -62.5 20.5" fill="none" stroke="#444" stroke-width="0.9"/>
<path d="M-67.5 -21.5 C-64.5 -10 -64.5 10 -67.5 20.5" fill="none" stroke="#555" stroke-width="0.8"/>
</g>
<path d="M542.6 243.0 L542.4 243.6 L542.2 244.1 L542.0 244.6 L541.8 245.2 L541.6 245.7 L541.3 246.3 L541.1 246.8 L540.9 247.3 L540.7 247.9 L540.4 248.4 L540.2 248.9 L540.0 249.5 L539.7 250.0 L539.5 250.5 L539.2 251.0 L539.0 251.6 L538.7 252.1 L538.5 252.6 L538.2 253.1 L538.0 253.7 L537.7 254.2 L537.5 254.7 L537.2 255.2 L537.0 255.7 L536.7 256.3 L536.4 256.8 L536.2 257.3 L535.9 257.8 L535.6 258.3 L535.3 258.8 L535.1 259.3 L534.8 259.9 L534.5 260.4 L534.2 260.9 L533.9 261.4 L533.7 261.9 L533.4 262.4 L533.1 262.9 L532.8 263.4 L532.5 263.9 L515.5 283.3 L515.3 283.5 L515.1 283.6 L515.0 283.8 L514.8 284.0 L514.6 284.2 L514.5 284.4 L514.3 284.6 L514.1 284.8 L514.0 285.0 L513.8 285.2 L513.6 285.4 L513.4 285.5 L513.3 285.7 L513.1 285.9 L512.9 286.1 L512.7 286.3 L512.6 286.5 L512.4 286.7 L512.2 286.9 L512.1 287.1 L511.9 287.2 L511.7 287.4 L511.5 287.6 L511.4 287.8 L511.2 288.0 L511.0 288.2 L510.8 288.4 L510.7 288.5 L510.5 288.7 L510.3 288.9 L510.1 289.1 L509.9 289.3 L509.8 289.5 L509.6 289.6 L509.4 289.8 L509.2 290.0 L509.0 290.2 L508.9 290.4 L508.7 290.5 L508.5 290.7 L503.5 289.3 L504.6 288.3 L505.7 287.2 L506.8 286.1 L507.9 284.9 L508.9 283.8 L510.0 282.7 L511.0 281.5 L512.0 280.4 L513.0 279.2 L514.0 278.0 L515.0 276.8 L516.0 275.6 L516.9 274.4 L517.9 273.2 L518.8 271.9 L519.7 270.7 L520.6 269.4 L521.5 268.2 L522.3 266.9 L523.2 265.6 L524.0 264.3 L524.8 263.0 L525.6 261.7 L526.4 260.4 L527.2 259.1 L528.0 257.7 L528.7 256.4 L529.4 255.0 L530.2 253.7 L530.9 252.3 L531.5 250.9 L532.2 249.5 L532.9 248.1 L533.5 246.8 L534.1 245.3 L534.7 243.9 L535.3 242.5 L535.9 241.1 L536.4 239.7 L537.0 238.2Z" fill="#2a2a2a"/>
<path d="M541.6 238.6 L541.2 239.8 L540.7 241.0 L540.3 242.2 L539.8 243.4 L539.3 244.6 L538.8 245.8 L538.3 247.0 L537.8 248.2 L537.2 249.4 L536.7 250.6 L536.1 251.8 L535.6 252.9 L535.0 254.1 L534.4 255.3 L533.8 256.4 L533.2 257.6 L532.6 258.7 L531.9 259.8 L531.3 261.0 L530.7 262.1 L530.0 263.2 L529.3 264.3 L528.6 265.4 L527.9 266.5 L527.2 267.6 L526.5 268.7 L525.8 269.8 L525.1 270.9 L524.3 272.0 L523.6 273.0 L522.8 274.1 L522.0 275.1 L521.2 276.2 L520.4 277.2 L519.6 278.2 L518.8 279.2 L518.0 280.3 L517.2 281.3 L516.3 282.3 L515.5 283.3 L510.7 292.8 L510.6 292.9 L510.5 293.0 L510.4 293.1 L510.3 293.2 L510.2 293.3 L510.1 293.4 L510.0 293.5 L509.9 293.6 L509.8 293.6 L509.7 293.7 L509.6 293.8 L509.5 293.9 L509.5 294.0 L509.4 294.1 L509.3 294.2 L509.2 294.3 L509.1 294.4 L509.0 294.5 L508.9 294.6 L508.8 294.6 L508.7 294.7 L508.6 294.8 L508.5 294.9 L508.4 295.0 L508.3 295.1 L508.2 295.2 L508.1 295.3 L508.0 295.4 L507.9 295.5 L507.9 295.5 L507.8 295.6 L507.7 295.7 L507.6 295.8 L507.5 295.9 L507.4 296.0 L507.3 296.1 L507.2 296.2 L507.1 296.3 L507.0 296.4 L506.9 296.4 L504.3 305.4 L503.8 305.8 L503.3 306.2 L502.8 306.6 L502.3 307.0 L501.8 307.4 L501.3 307.8 L500.8 308.2 L500.3 308.6 L499.8 309.0 L499.3 309.4 L498.8 309.8 L498.3 310.2 L497.7 310.6 L497.2 311.0 L496.7 311.4 L496.2 311.7 L495.7 312.1 L495.1 312.5 L494.6 312.9 L494.1 313.2 L493.6 313.6 L493.0 314.0 L492.5 314.3 L492.0 314.7 L491.4 315.1 L490.9 315.4 L490.4 315.8 L489.8 316.1 L489.3 316.5 L488.7 316.8 L488.2 317.2 L487.6 317.5 L487.1 317.9 L486.5 318.2 L486.0 318.6 L485.4 318.9 L484.9 319.2 L484.3 319.6 L483.8 319.9 L483.2 320.2 L476.5 309.3 L478.6 308.1 L480.7 306.8 L482.7 305.5 L484.8 304.1 L486.8 302.7 L488.7 301.3 L490.7 299.9 L492.6 298.4 L494.5 296.9 L496.4 295.3 L498.2 293.8 L500.0 292.2 L501.8 290.5 L503.5 288.9 L505.3 287.2 L507.0 285.5 L508.6 283.7 L510.2 281.9 L511.8 280.1 L513.4 278.3 L514.9 276.4 L516.4 274.6 L517.9 272.6 L519.3 270.7 L520.7 268.8 L522.0 266.8 L523.4 264.8 L524.6 262.8 L525.9 260.7 L527.1 258.6 L528.3 256.6 L529.4 254.5 L530.5 252.3 L531.6 250.2 L532.6 248.0 L533.6 245.8 L534.5 243.7 L535.4 241.4 L536.3 239.2 L537.1 237.0Z" fill="#b08010" stroke="#3a2a06" stroke-width="0.9"/>
<path d="M538.3 240.0 L537.6 241.9 L536.8 243.8 L536.0 245.7 L535.2 247.5 L534.4 249.4 L533.5 251.2 L532.6 253.0 L531.7 254.8 L530.8 256.6 L529.8 258.4 L528.8 260.1 L527.8 261.9 L526.7 263.6 L525.6 265.3 L524.5 267.0 L523.4 268.7 L522.2 270.4 L521.1 272.0 L519.9 273.7 L518.6 275.3 L517.4 276.9 L516.1 278.5 L514.8 280.0 L513.5 281.6 L512.1 283.1 L510.8 284.6 L509.4 286.1 L508.0 287.6 L506.5 289.0 L505.1 290.5 L503.6 291.9 L502.1 293.3 L500.6 294.6 L499.0 296.0 L497.5 297.3 L495.9 298.6 L494.3 299.9 L492.7 301.1 L491.0 302.4 L489.4 303.6" fill="none" stroke="#4a3a08" stroke-width="3.2"/>
<path d="M537.9 241.2 L537.1 243.0 L536.4 244.8 L535.6 246.6 L534.8 248.4 L534.0 250.2 L533.1 252.0 L532.3 253.7 L531.4 255.5 L530.4 257.2 L529.5 258.9 L528.5 260.6 L527.5 262.3 L526.5 264.0 L525.4 265.6 L524.4 267.3 L523.3 268.9 L522.1 270.5 L521.0 272.1 L519.8 273.7 L518.6 275.3 L517.4 276.8 L516.2 278.4 L514.9 279.9 L513.6 281.4 L512.3 282.9 L511.0 284.3 L509.7 285.8 L508.3 287.2 L506.9 288.6 L505.5 290.0 L504.1 291.4 L502.6 292.8 L501.2 294.1 L499.7 295.4 L498.2 296.7 L496.7 298.0 L495.1 299.2 L493.6 300.5 L492.0 301.7 L490.4 302.9" fill="none" stroke="#f2e20a" stroke-width="1.7"/>
<path d="M535.9 235.3 L535.1 237.6 L534.2 239.9 L533.3 242.2 L532.3 244.5 L531.3 246.8 L530.2 249.0 L529.1 251.3 L528.0 253.5 L526.8 255.7 L525.6 257.8 L524.4 260.0 L523.1 262.1 L521.7 264.2 L520.3 266.3 L518.9 268.3 L517.5 270.3 L516.0 272.3 L514.5 274.3 L512.9 276.2 L511.3 278.2 L509.6 280.0 L508.0 281.9 L506.3 283.7 L504.5 285.5 L502.7 287.3 L500.9 289.0 L499.1 290.7 L497.2 292.4 L495.3 294.0 L493.4 295.6 L491.4 297.2 L489.4 298.7 L487.4 300.2 L485.3 301.7 L483.2 303.1 L481.1 304.5 L479.0 305.9 L476.8 307.2 L474.6 308.4 L472.4 309.7" fill="none" stroke="#ffffff" stroke-width="1.5"/>
<ellipse cx="495" cy="309" rx="6.5" ry="2.8" transform="rotate(-45 495 309)" fill="#1e1e18"/>
<ellipse cx="505" cy="297" rx="3" ry="1.8" transform="rotate(-45 505 297)" fill="#1e1e18"/>
<path d="M511.5 276 l6 3.5" stroke="#333" stroke-width="1.4"/>
<g id="toolbar">
<rect x="480" y="4.5" width="211" height="20.5" fill="#e6e7ea" stroke="#d6d8db" stroke-width="1"/>
<rect x="483.5" y="5.5" width="203.5" height="18.5" fill="#fbfbfc"/>
<g stroke="#dfe0e3" stroke-width="1.2">
<path d="M503.5 5v19M524 5v19M544.4 5v19M564.5 5v19M585.3 5v19M606.3 5v19M626.4 5v19M647.3 5v19M666.3 5v19M687.3 5v19"/>
</g>
<rect x="648" y="6" width="18" height="18" fill="#e4e5e8" stroke="#c2c4c8" stroke-width="1"/>
<!-- 1 zoom window -->
<rect x="488.2" y="9.2" width="9.6" height="9.8" fill="#c8d4f0" stroke="#2a48c0" stroke-width="1.3"/>
<circle cx="492.8" cy="14" r="3.2" fill="#f4f4f4" stroke="#555" stroke-width="0.9"/>
<path d="M495 16.3l4.5 4.5" stroke="#8a3a1a" stroke-width="1.6"/>
<!-- 2 zoom in -->
<circle cx="512.3" cy="13.2" r="4" fill="#fafafa" stroke="#222" stroke-width="1"/>
<path d="M510 13.2h4.6M512.3 10.9v4.6" stroke="#111" stroke-width="1.4"/>
<path d="M515 16l4.2 4.5" stroke="#8a3a1a" stroke-width="1.6"/>
<!-- 3 zoom out -->
<circle cx="532.5" cy="13.2" r="4" fill="#fafafa" stroke="#222" stroke-width="1"/>
<path d="M530.2 13.2h4.6" stroke="#111" stroke-width="1.4"/>
<path d="M535.2 16l4.2 4.5" stroke="#8a3a1a" stroke-width="1.6"/>
<!-- 4 refit -->
<rect x="549.5" y="10" width="9.5" height="10" fill="#e0e8f8" stroke="#2a48c0" stroke-width="1.2"/>
<path d="M551.5 19l5.5-6.5" stroke="#1a30b0" stroke-width="1.4"/>
<path d="M556 13l2-2.5" stroke="#7a9ad0" stroke-width="1"/>
<!-- 5 cube -->
<path d="M569.5 12.5l2-2h7.5v7.5l-2 2h-7.5z" fill="#f8f8f8" stroke="#111" stroke-width="1.1"/>
<path d="M571.5 10.5h7.5l-2 2h-7.5z" fill="#3ab8b0"/>
<path d="M579 10.5v7.5l-2 2v-7.5z" fill="#1a8a88"/>
<path d="M569.5 12.5h7.5v7.5" fill="none" stroke="#111" stroke-width="1"/>
<path d="M581.5 22l1.5-1.3" stroke="#333" stroke-width="1"/>
<!-- 6 saved views -->
<path d="M590 13.5l2-2h4v7.5h-6z" fill="#f4f6f6" stroke="#b0b8b8" stroke-width="0.9"/>
<path d="M596 18.5c1 0 2-1 2.5-2" stroke="#1aa8a8" stroke-width="1.4" fill="none"/>
<text x="594.5" y="15" font-family="Liberation Sans" font-size="5.5" font-weight="bold" fill="#555">AB</text>
<path d="M602.5 22l1.5-1.3" stroke="#333" stroke-width="1"/>
<!-- 7 camera/display -->
<path d="M610.5 20.5v-11h9.5v4" fill="none" stroke="#666" stroke-width="0.9"/>
<path d="M612 12h6.5" stroke="#999" stroke-width="0.8"/>
<rect x="612.8" y="14.8" width="9.4" height="6.4" rx="1" fill="#3a3a3a"/>
<rect x="615.5" y="13.5" width="3.5" height="1.5" fill="#3a3a3a"/>
<circle cx="617.5" cy="18" r="2" fill="#e8e8e8"/><circle cx="617.5" cy="18" r="1" fill="#555"/>
<!-- 8 datum display -->
<g stroke="#9a4a1a" stroke-width="1.3">
<path d="M630 10l3 3M633 10l-3 3M635.5 10.5l-1 2M633 16.5l-2 4M637 15l4.5 6M641.5 15l-4.5 6M638 18.5h-3"/>
</g>
<path d="M643.3 22l1.3-1.2" stroke="#333" stroke-width="0.9"/>
<!-- 9 pressed -->
<rect x="651.5" y="9.5" width="6.5" height="3" fill="#e8e870" stroke="#8a8a30" stroke-width="0.8"/>
<path d="M659 10h3l-3 5h3" stroke="#333" stroke-width="0.9" fill="none"/>
<path d="M660.5 15l-2 4" stroke="#555" stroke-width="0.8"/>
<ellipse cx="659" cy="20" rx="3.2" ry="2" fill="#8aa0d8" stroke="#707070" stroke-width="0.7"/>
<!-- 10 nodes -->
<path d="M673 12l3.3 3.3l5 0M676.3 15.3l-2.8 4.2" stroke="#555" stroke-width="0.9" fill="none"/>
<circle cx="673.2" cy="11.5" r="2.1" fill="#22c022"/>
<circle cx="681.7" cy="15.2" r="2.1" fill="#e01818"/>
<circle cx="673.2" cy="19.7" r="2.1" fill="#20d8e0"/>
</g>

<text x="229" y="521" font-family="Liberation Sans" font-size="11.2" fill="#676767" letter-spacing="-0.1">Stil-Zustand:Master-Stil(+)</text>
</svg>
</body></html>
